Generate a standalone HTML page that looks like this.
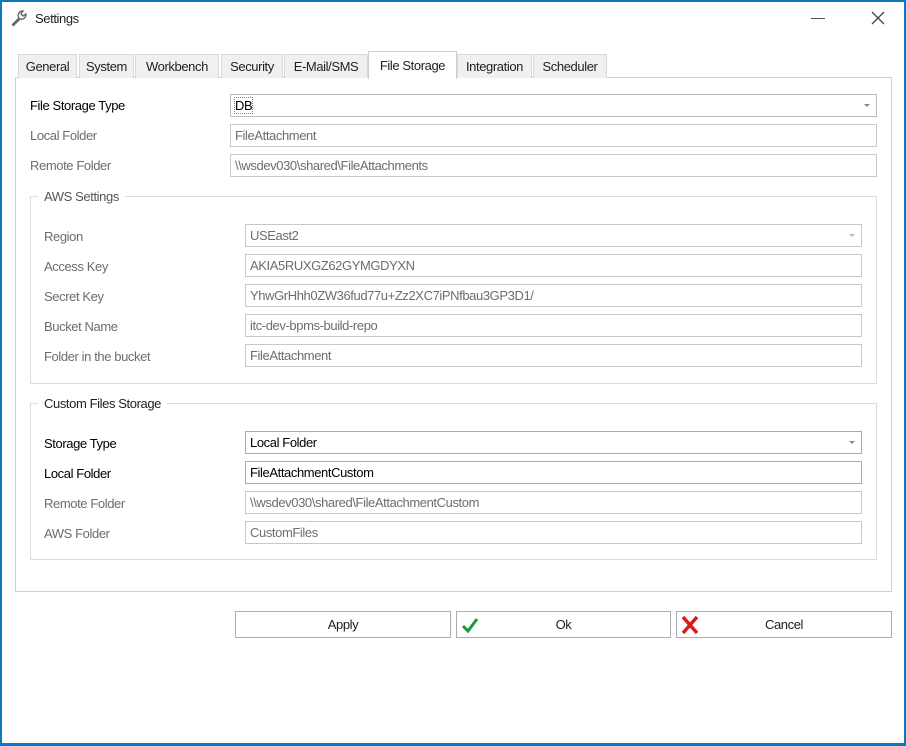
<!DOCTYPE html>
<html><head><meta charset="utf-8"><style>
*{margin:0;padding:0;box-sizing:border-box}
body{width:906px;height:746px;position:relative;background:#fff;font-family:"Liberation Sans",sans-serif;font-size:13px;color:#000;overflow:hidden;letter-spacing:-0.4px}
.win{position:absolute;left:0;top:0;width:906px;height:746px;border:2px solid #0b79bf;border-bottom-width:3px}
.a{position:absolute;white-space:nowrap}
.tab{position:absolute;top:54px;height:24px;background:#f0f0f0;border:1px solid #d9d9d9;border-bottom:none;text-align:center;line-height:24px;color:#222}
.lbl{position:absolute;line-height:16px;top:1px}
.g{color:#6d6d6d}
.in{position:absolute;height:23px;border:1px solid #c8c8c8;background:#fff;line-height:22px;padding-left:4px;color:#6d6d6d}
.in.b{color:#000;border-color:#aaa}
.arr{position:absolute;right:6px;top:9px;width:0;height:0;border-left:3px solid transparent;border-right:3px solid transparent;border-top:3px solid #888}
.grp{position:absolute;border:1px solid #dcdcdc}
.gt{position:absolute;background:#fff;padding:0 6px;color:#555;line-height:16px}
.btn{position:absolute;top:611px;height:27px;border:1px solid #adadad;background:#fff;text-align:center;line-height:26px;color:#222}
</style></head><body>
<div class="win"></div>
<svg class="a" style="left:9px;top:9px" width="20" height="18" viewBox="0 0 20 18"><path d="M3 16 L10 9 M10 9 C8 6 10 2 14 2 L12 5 L14 7 L17 5 C17 9 14 11 11 10 L4 17 Z" fill="none" stroke="#666" stroke-width="1.4"/></svg>
<div class="a" style="left:35px;top:11px;color:#222">Settings</div>
<div class="a" style="left:811px;top:18px;width:14px;height:1px;background:#555"></div>
<svg class="a" style="left:871px;top:11px" width="14" height="14"><path d="M1 1L13 13M13 1L1 13" stroke="#444" stroke-width="1.3"/></svg>

<div class="a" style="left:15px;top:77px;width:877px;height:515px;border:1px solid #cfcfcf;background:#fff"></div>
<div class="tab" style="left:18px;width:59px">General</div>
<div class="tab" style="left:79px;width:55px">System</div>
<div class="tab" style="left:135px;width:84px">Workbench</div>
<div class="tab" style="left:221px;width:62px">Security</div>
<div class="tab" style="left:284px;width:84px">E-Mail/SMS</div>
<div class="tab" style="left:368px;top:51px;height:28px;width:89px;background:#fff;border-color:#cfcfcf;line-height:27px">File Storage</div>
<div class="tab" style="left:457px;width:75px">Integration</div>
<div class="tab" style="left:533px;width:74px">Scheduler</div>

<div class="lbl" style="left:30px;top:98px">File Storage Type</div>
<div class="lbl g" style="left:30px;top:128px">Local Folder</div>
<div class="lbl g" style="left:30px;top:158px">Remote Folder</div>
<div class="in b" style="left:230px;top:94px;width:647px;border-color:#bbb"><span style="outline:1px dotted #888;color:#000">DB</span><div class="arr"></div></div>
<div class="in" style="left:230px;top:124px;width:647px">FileAttachment</div>
<div class="in" style="left:230px;top:154px;width:647px">\\wsdev030\shared\FileAttachments</div>

<div class="grp" style="left:30px;top:196px;width:847px;height:188px"></div>
<div class="gt" style="left:38px;top:189px">AWS Settings</div>
<div class="lbl g" style="left:44px;top:229px">Region</div>
<div class="lbl g" style="left:44px;top:259px">Access Key</div>
<div class="lbl g" style="left:44px;top:289px">Secret Key</div>
<div class="lbl g" style="left:44px;top:319px">Bucket Name</div>
<div class="lbl g" style="left:44px;top:349px">Folder in the bucket</div>
<div class="in" style="left:245px;top:224px;width:617px">USEast2<div class="arr" style="border-top-color:#bbb"></div></div>
<div class="in" style="left:245px;top:254px;width:617px">AKIA5RUXGZ62GYMGDYXN</div>
<div class="in" style="left:245px;top:284px;width:617px">YhwGrHhh0ZW36fud77u+Zz2XC7iPNfbau3GP3D1/</div>
<div class="in" style="left:245px;top:314px;width:617px">itc-dev-bpms-build-repo</div>
<div class="in" style="left:245px;top:344px;width:617px">FileAttachment</div>

<div class="grp" style="left:30px;top:403px;width:847px;height:157px"></div>
<div class="gt" style="left:38px;top:396px;color:#222">Custom Files Storage</div>
<div class="lbl" style="left:44px;top:436px">Storage Type</div>
<div class="lbl" style="left:44px;top:466px">Local Folder</div>
<div class="lbl g" style="left:44px;top:496px">Remote Folder</div>
<div class="lbl g" style="left:44px;top:526px">AWS Folder</div>
<div class="in b" style="left:245px;top:431px;width:617px">Local Folder<div class="arr"></div></div>
<div class="in b" style="left:245px;top:461px;width:617px">FileAttachmentCustom</div>
<div class="in" style="left:245px;top:491px;width:617px">\\wsdev030\shared\FileAttachmentCustom</div>
<div class="in" style="left:245px;top:521px;width:617px">CustomFiles</div>

<div class="btn" style="left:235px;width:216px">Apply</div>
<div class="btn" style="left:456px;width:215px">Ok<svg class="a" style="left:4px;top:5px" width="18" height="16"><path d="M2 9L7 14L16 2" fill="none" stroke="#1a9a3a" stroke-width="3"/></svg></div>
<div class="btn" style="left:676px;width:216px">Cancel<svg class="a" style="left:4px;top:3px" width="18" height="20"><path d="M2 2L16 18M16 2L2 18" stroke="#d81c1c" stroke-width="3.5"/></svg></div>
</body></html>
